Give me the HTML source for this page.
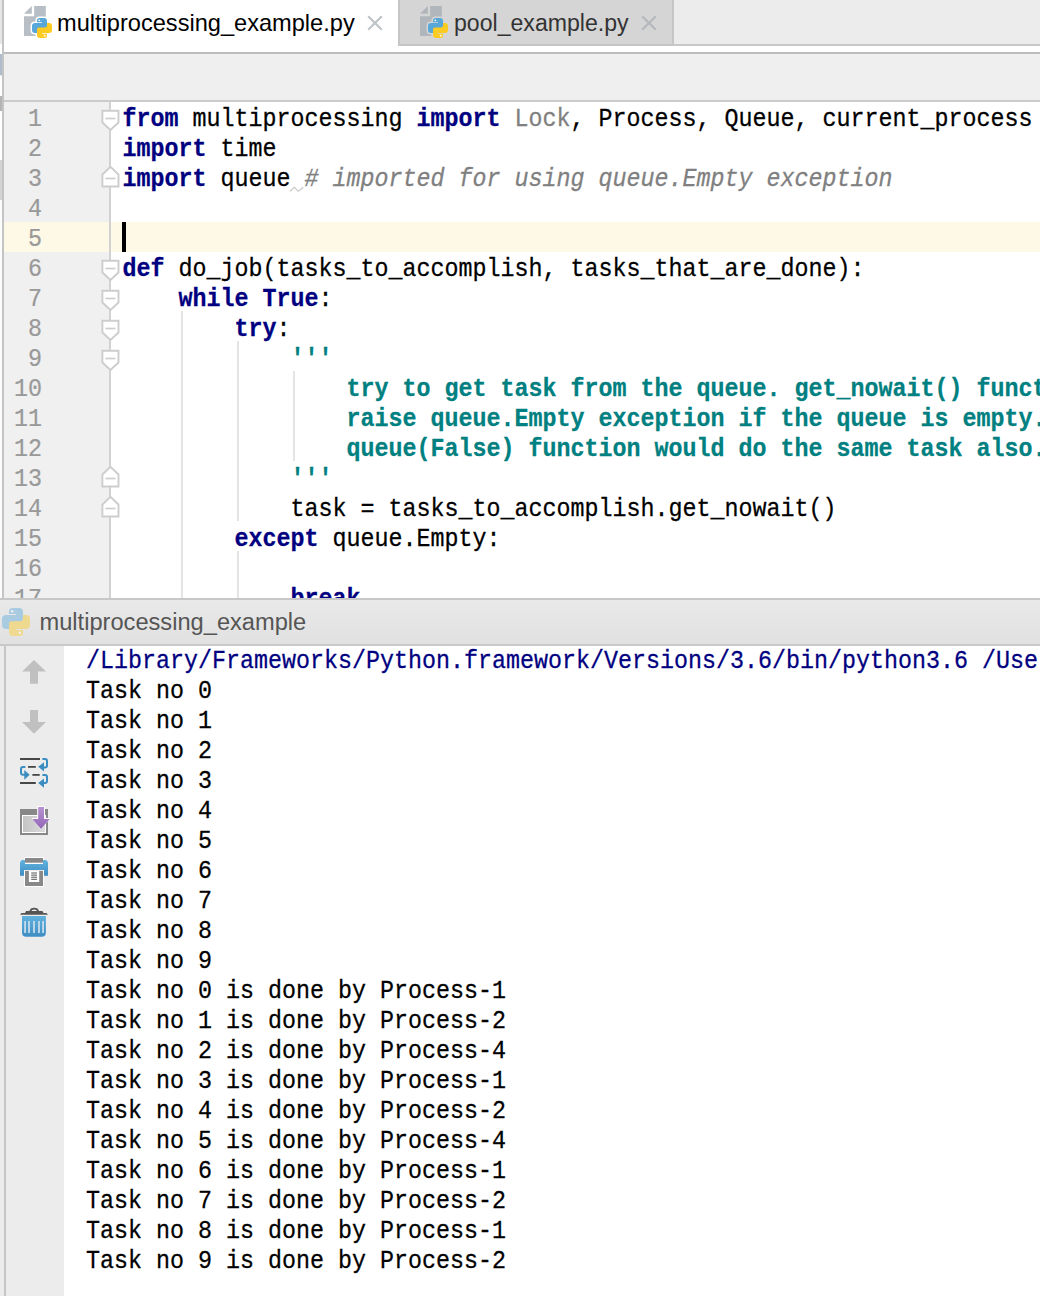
<!DOCTYPE html>
<html><head><meta charset="utf-8">
<style>
*{margin:0;padding:0;box-sizing:border-box}
html,body{width:1040px;height:1296px;overflow:hidden;background:#fff}
body{position:relative;font-family:"Liberation Sans",sans-serif}
.abs{position:absolute}
svg.abs{overflow:visible}
#tabs{left:0;top:0;width:1040px;height:46px;background:#ececec}
.tab{position:absolute;top:0;height:46px}
.tab .t{position:absolute;top:8px;font-size:23.4px;line-height:30px;white-space:nowrap}
#tab1{left:4px;width:394px;height:52px;background:#fff}
#tab2{left:398px;width:276px;background:#d5d5d5;border-left:2px solid #c6c6c6;border-right:2px solid #c6c6c6;border-bottom:2px solid #c6c6c6}
#sep1{left:0;top:46px;width:1040px;height:6px;background:#fff}
#bar{left:0;top:52px;width:1040px;height:50px;background:#efefef;border-top:2px solid #bcbcbc;border-bottom:2px solid #cbcbcb}
#editor{left:0;top:102px;width:1040px;height:496px;background:#fff;overflow:hidden}
#gutter{left:4px;top:0;width:106px;height:496px;background:#f0f0f0}
#gline{left:109px;top:0;width:2px;height:496px;background:#d2d2d2}
.code{font-family:"Liberation Mono",monospace;font-size:23.33px;line-height:30px;white-space:pre;-webkit-text-stroke:0.25px currentColor}
.code div{position:absolute;left:0;height:30px;transform:scaleY(1.09);transform-origin:0 21px}
.ln{position:absolute;left:4px;width:38px;height:30px;text-align:right;color:#999;font-family:"Liberation Mono",monospace;font-size:23.33px;line-height:30px;transform:scaleY(1.08);transform-origin:0 21px;-webkit-text-stroke:0.2px currentColor}
.k{color:#000080;font-weight:bold}
.g{color:#808080}
.cm{color:#808080;font-style:italic}
.ds{color:#008080;font-weight:bold}
.cur{background:#fef9e6}
.guide{position:absolute;width:2px;background:#e4e4e4}
#runhdr{left:0;top:598px;width:1040px;height:48px;background:linear-gradient(#e9e9e9,#e1e1e1);border-top:2px solid #c7c7c7;border-bottom:2px solid #c9c9c9}
#runhdr .t{position:absolute;left:39.5px;top:7px;font-size:23.65px;line-height:30px;color:#555}
#console{left:0;top:646px;width:1040px;height:650px;background:#fff}
#tool{left:0;top:0;width:64px;height:650px;background:#ececec}
#toolb{left:4px;top:0;width:2px;height:650px;background:#c6c6c6}
#out{left:86px;top:0}
</style></head><body>
<svg width="0" height="0" style="position:absolute"><defs><path id="pyb" d="M7.5,0 H12 Q15,0 15,3 V8.5 Q15,10.5 13,10.5 H7.5 Q5,10.5 5,13 V15 H3 Q0,15 0,12 V8 Q0,5 3,5 H10 V4.3 H5 V2.5 Q5,0 7.5,0 Z"/></defs></svg>
<div id="tabs" class="abs">
  <div class="abs" style="left:398px;top:44px;width:642px;height:2px;background:#c8c8c8"></div>
  <div id="tab1" class="tab">
    <svg class="abs" style="left:-4px;top:0" width="60" height="46" viewBox="0 0 60 46">
<path d="M24,13.8 L31.8,6 V13.8 Z" fill="#b8bec5"/>
<path d="M34.2,6 H45.8 V36 H24 V16.2 H34.2 Z" fill="#b8bec5"/>
<g transform="translate(32,18)">
<use href="#pyb" fill="#fff" stroke="#fff" stroke-width="3"/>
<use href="#pyb" transform="rotate(180 10 10)" fill="#fff" stroke="#fff" stroke-width="3"/>
<use href="#pyb" fill="#57a8d8"/>
<use href="#pyb" transform="rotate(180 10 10)" fill="#fecb22"/>
<circle cx="7.3" cy="2.3" r="0.9" fill="#fff"/>
<circle cx="12.7" cy="17.7" r="0.9" fill="#fff"/>
</g></svg>
    <div class="t" style="left:53px;color:#000;font-size:23.6px">multiprocessing_example.py</div>
    <svg class="abs" style="left:363px;top:15px" width="16" height="16" viewBox="0 0 16 16"><path d="M1.2,1.2 L14.8,14.8 M14.8,1.2 L1.2,14.8" stroke="#bfc4c8" stroke-width="2.2"/></svg>
  </div>
  <div id="tab2" class="tab">
    <svg class="abs" style="left:-4px;top:0" width="60" height="46" viewBox="0 0 60 46">
<path d="M24,13.8 L31.8,6 V13.8 Z" fill="#b0b6bc"/>
<path d="M34.2,6 H45.8 V36 H24 V16.2 H34.2 Z" fill="#b0b6bc"/>
<g transform="translate(32,18)">
<use href="#pyb" fill="#d5d5d5" stroke="#d5d5d5" stroke-width="3"/>
<use href="#pyb" transform="rotate(180 10 10)" fill="#d5d5d5" stroke="#d5d5d5" stroke-width="3"/>
<use href="#pyb" fill="#57a8d8"/>
<use href="#pyb" transform="rotate(180 10 10)" fill="#fecb22"/>
<circle cx="7.3" cy="2.3" r="0.9" fill="#fff"/>
<circle cx="12.7" cy="17.7" r="0.9" fill="#fff"/>
</g></svg>
    <div class="t" style="left:54px;color:#333;font-size:23.1px">pool_example.py</div>
    <svg class="abs" style="left:241px;top:15px" width="16" height="16" viewBox="0 0 16 16"><path d="M1.2,1.2 L14.8,14.8 M14.8,1.2 L1.2,14.8" stroke="#b5b9bd" stroke-width="2.2"/></svg>
  </div>
</div>
<div id="sep1" class="abs"></div>
<div id="bar" class="abs"></div>
<div id="editor" class="abs">
  <div id="gutter" class="abs"></div>
  <div class="abs cur" style="left:4px;top:120px;width:1036px;height:30px"></div>
  <div id="gline" class="abs"></div>
  <div class="guide" style="left:181px;top:209px;height:300px"></div>
  <div class="guide" style="left:237px;top:239px;height:180px"></div>
  <div class="guide" style="left:237px;top:449px;height:60px"></div>
  <div class="guide" style="left:293px;top:269px;height:90px"></div>
  <div class="abs" style="left:122px;top:120px;width:4px;height:30px;background:#000"></div>
  <svg class="abs" style="left:0;top:0" width="140" height="496"><path d="M102.4,8.7 H118.5 V20.5 L110.45,28.0 L102.4,20.5 Z" fill="#fff" stroke="#cdcdcd" stroke-width="1.9"/><path d="M105.45,16.5 H115.45" stroke="#cdcdcd" stroke-width="1.7"/><path d="M102.4,84.5 H118.5 V72.5 L110.45,64.7 L102.4,72.5 Z" fill="#fff" stroke="#cdcdcd" stroke-width="1.9"/><path d="M105.45,76.5 H115.45" stroke="#cdcdcd" stroke-width="1.7"/><path d="M102.4,158.7 H118.5 V170.5 L110.45,178.0 L102.4,170.5 Z" fill="#fff" stroke="#cdcdcd" stroke-width="1.9"/><path d="M105.45,166.5 H115.45" stroke="#cdcdcd" stroke-width="1.7"/><path d="M102.4,188.7 H118.5 V200.5 L110.45,208.0 L102.4,200.5 Z" fill="#fff" stroke="#cdcdcd" stroke-width="1.9"/><path d="M105.45,196.5 H115.45" stroke="#cdcdcd" stroke-width="1.7"/><path d="M102.4,218.7 H118.5 V230.5 L110.45,238.0 L102.4,230.5 Z" fill="#fff" stroke="#cdcdcd" stroke-width="1.9"/><path d="M105.45,226.5 H115.45" stroke="#cdcdcd" stroke-width="1.7"/><path d="M102.4,248.7 H118.5 V260.5 L110.45,268.0 L102.4,260.5 Z" fill="#fff" stroke="#cdcdcd" stroke-width="1.9"/><path d="M105.45,256.5 H115.45" stroke="#cdcdcd" stroke-width="1.7"/><path d="M102.4,384.5 H118.5 V372.5 L110.45,364.7 L102.4,372.5 Z" fill="#fff" stroke="#cdcdcd" stroke-width="1.9"/><path d="M105.45,376.5 H115.45" stroke="#cdcdcd" stroke-width="1.7"/><path d="M102.4,414.5 H118.5 V402.5 L110.45,394.7 L102.4,402.5 Z" fill="#fff" stroke="#cdcdcd" stroke-width="1.9"/><path d="M105.45,406.5 H115.45" stroke="#cdcdcd" stroke-width="1.7"/></svg>
  <svg class="abs" style="left:288px;top:84px" width="18" height="8"><path d="M2,5.3 L6.5,1.3 L10.3,5.3 L15.3,1.3" fill="none" stroke="#c8c8c8" stroke-width="1.2"/></svg>
  <div class="ln" style="top:3px">1</div>
  <div class="ln" style="top:33px">2</div>
  <div class="ln" style="top:63px">3</div>
  <div class="ln" style="top:93px">4</div>
  <div class="ln" style="top:123px">5</div>
  <div class="ln" style="top:153px">6</div>
  <div class="ln" style="top:183px">7</div>
  <div class="ln" style="top:213px">8</div>
  <div class="ln" style="top:243px">9</div>
  <div class="ln" style="top:273px">10</div>
  <div class="ln" style="top:303px">11</div>
  <div class="ln" style="top:333px">12</div>
  <div class="ln" style="top:363px">13</div>
  <div class="ln" style="top:393px">14</div>
  <div class="ln" style="top:423px">15</div>
  <div class="ln" style="top:453px">16</div>
  <div class="ln" style="top:483px">17</div>
  <div class="abs code" style="left:122.5px;top:3px"><div style="top:0px"><span class="k">from</span> multiprocessing <span class="k">import</span> <span class="g">Lock</span>, Process, Queue, current_process</div><div style="top:30px"><span class="k">import</span> time</div><div style="top:60px"><span class="k">import</span> queue <span class="cm"># imported for using queue.Empty exception</span></div><div style="top:90px"></div><div style="top:120px"></div><div style="top:150px"><span class="k">def</span> do_job(tasks_to_accomplish, tasks_that_are_done):</div><div style="top:180px">    <span class="k">while</span> <span class="k">True</span>:</div><div style="top:210px">        <span class="k">try</span>:</div><div style="top:240px">            <span class="ds">'''</span></div><div style="top:270px">                <span class="ds">try to get task from the queue. get_nowait() function will</span></div><div style="top:300px">                <span class="ds">raise queue.Empty exception if the queue is empty.</span></div><div style="top:330px">                <span class="ds">queue(False) function would do the same task also.</span></div><div style="top:360px">            <span class="ds">'''</span></div><div style="top:390px">            task = tasks_to_accomplish.get_nowait()</div><div style="top:420px">        <span class="k">except</span> queue.Empty:</div><div style="top:450px"></div><div style="top:480px">            <span class="k">break</span></div></div>
</div>
<div class="abs" style="left:0;top:0;width:2px;height:598px;background:#e6e6e6"></div>
<div class="abs" style="left:0;top:44px;width:2px;height:10px;background:#fff"></div>
<div class="abs" style="left:0;top:54px;width:2px;height:21px;background:#aebccb"></div>
<div class="abs" style="left:0;top:76px;width:2px;height:20px;background:#fff"></div>
<div class="abs" style="left:0;top:96px;width:2px;height:15px;background:#b4b4b4"></div>
<div class="abs" style="left:0;top:111px;width:2px;height:49px;background:#fff"></div>
<div class="abs" style="left:0;top:160px;width:2px;height:40px;background:#d4d4d4"></div>
<div class="abs" style="left:0;top:200px;width:2px;height:398px;background:#fcfcfc"></div>
<div class="abs" style="left:2px;top:0;width:2px;height:598px;background:#c4c4c4"></div>
<div id="runhdr" class="abs"><div class="t">multiprocessing_example</div></div>
<svg class="abs" style="left:2px;top:608px" width="28" height="28" viewBox="0 0 20 20">
<use href="#pyb" fill="#a9cbe2"/><use href="#pyb" transform="rotate(180 10 10)" fill="#efd98f"/>
<circle cx="7.3" cy="2.3" r="0.9" fill="#f0f0f0"/><circle cx="12.7" cy="17.7" r="0.9" fill="#f0f0f0"/></svg>
<div id="console" class="abs">
  <div id="tool" class="abs"></div>
  <div id="toolb" class="abs"></div>
  <svg class="abs" style="left:0;top:0" width="64" height="650" viewBox="0 646 64 650">
<defs>
<linearGradient id="gblue" x1="0" y1="0" x2="0" y2="1"><stop offset="0" stop-color="#62b2de"/><stop offset="1" stop-color="#3d8dc3"/></linearGradient>
<linearGradient id="gpur" x1="0" y1="0" x2="0" y2="1"><stop offset="0" stop-color="#b893d2"/><stop offset="1" stop-color="#9365b6"/></linearGradient>
<linearGradient id="ggray" x1="0" y1="0" x2="1" y2="0"><stop offset="0" stop-color="#c4c4c4"/><stop offset="1" stop-color="#dadada"/></linearGradient>
</defs>
<path d="M34,660 L46,671.6 H38 V683.8 H30 V671.6 H22 Z" fill="#c0c0c0"/>
<path d="M34,733.7 L46,722.1 H38 V710 H30 V722.1 H22 Z" fill="#c0c0c0"/>
<g>
<rect x="20" y="758" width="20" height="2" fill="#474747"/>
<rect x="28" y="766" width="7.8" height="1.8" fill="#474747"/>
<rect x="32.4" y="774" width="7.3" height="1.8" fill="#474747"/>
<rect x="20" y="782" width="15.8" height="2" fill="#474747"/>
<path d="M42.4,759 H45 Q47,759 47,761 V765.5 Q47,767.5 45,767.5 H43" fill="none" stroke="#3a8dc0" stroke-width="2"/>
<path d="M38.2,766.8 L44,762.3 V771.6 Z" fill="#3a8dc0"/>
<path d="M25.4,767 H23 Q21,767 21,769 V772.5 Q21,774.7 23,774.7 H25" fill="none" stroke="#3a8dc0" stroke-width="2"/>
<path d="M29.7,774.8 L24.3,770 V779.7 Z" fill="#3a8dc0"/>
<path d="M42.4,775 H45 Q47,775 47,777 V781 Q47,783 45,783 H43" fill="none" stroke="#3a8dc0" stroke-width="2"/>
<path d="M38.2,783 L44,778.5 V787.8 Z" fill="#3a8dc0"/>
</g>
<g>
<rect x="20" y="809" width="28" height="26" fill="#888"/>
<rect x="22" y="815" width="24" height="18" fill="#fff"/>
<rect x="23" y="816" width="22" height="16" fill="url(#ggray)"/>
<path d="M37.2,806 H45 V818 H50.5 L41,829.5 L31.5,818 H37.2 Z" fill="#fff"/>
<path d="M38.2,807 H44 V819 H49.7 L41,829 L32.3,819 H38.2 Z" fill="url(#gpur)"/>
</g>
<g>
<rect x="24" y="857" width="20" height="7" fill="#fff"/>
<rect x="25" y="858" width="18" height="4.7" fill="#888"/>
<path d="M22,860 H25 V864 H43 V860 H46 Q48,861 48,863 V875.8 H20 V863 Q20,861 22,860 Z" fill="url(#gblue)"/>
<rect x="24" y="870" width="20" height="17" fill="#fff"/>
<rect x="25" y="870.8" width="18" height="15.2" fill="#888"/>
<rect x="28.9" y="870.8" width="10.3" height="11.2" fill="#fff"/>
<rect x="31.2" y="872.5" width="5.8" height="1" fill="#555"/>
<rect x="31.2" y="874.6" width="5.8" height="1" fill="#555"/>
<rect x="31.2" y="876.7" width="5.8" height="1" fill="#555"/>
<rect x="31.2" y="878.8" width="5.8" height="1" fill="#555"/>
</g>
<g>
<path d="M30.2,911.5 A4.1,3.6 0 0 1 38.2,911.5" fill="none" stroke="#555" stroke-width="1.8"/>
<path d="M20,914.8 L21.5,913 H25 L26,911 H42.5 L43.5,913 H46.5 L48,914.8 Z" fill="#555"/>
<path d="M22,916 H45.9 V932.5 Q45.9,936.8 41.5,936.8 H26.4 Q22,936.8 22,932.5 Z" fill="url(#gblue)"/>
<rect x="24.2" y="921" width="1.8" height="12" fill="#c6dbea"/>
<rect x="28.1" y="921" width="1.8" height="12" fill="#c6dbea"/>
<rect x="33.1" y="921" width="1.8" height="12" fill="#c6dbea"/>
<rect x="38.1" y="921" width="1.8" height="12" fill="#c6dbea"/>
<rect x="42.2" y="921" width="1.8" height="12" fill="#c6dbea"/>
</g>
</svg>
  <div id="out" class="abs code" style="top:0.5px"><div style="top:0px"><span style="color:#000080">/Library/Frameworks/Python.framework/Versions/3.6/bin/python3.6 /Users/example/multiprocessing_example.py</span></div><div style="top:30px">Task no 0</div><div style="top:60px">Task no 1</div><div style="top:90px">Task no 2</div><div style="top:120px">Task no 3</div><div style="top:150px">Task no 4</div><div style="top:180px">Task no 5</div><div style="top:210px">Task no 6</div><div style="top:240px">Task no 7</div><div style="top:270px">Task no 8</div><div style="top:300px">Task no 9</div><div style="top:330px">Task no 0 is done by Process-1</div><div style="top:360px">Task no 1 is done by Process-2</div><div style="top:390px">Task no 2 is done by Process-4</div><div style="top:420px">Task no 3 is done by Process-1</div><div style="top:450px">Task no 4 is done by Process-2</div><div style="top:480px">Task no 5 is done by Process-4</div><div style="top:510px">Task no 6 is done by Process-1</div><div style="top:540px">Task no 7 is done by Process-2</div><div style="top:570px">Task no 8 is done by Process-1</div><div style="top:600px">Task no 9 is done by Process-2</div></div>
</div>
</body></html>
